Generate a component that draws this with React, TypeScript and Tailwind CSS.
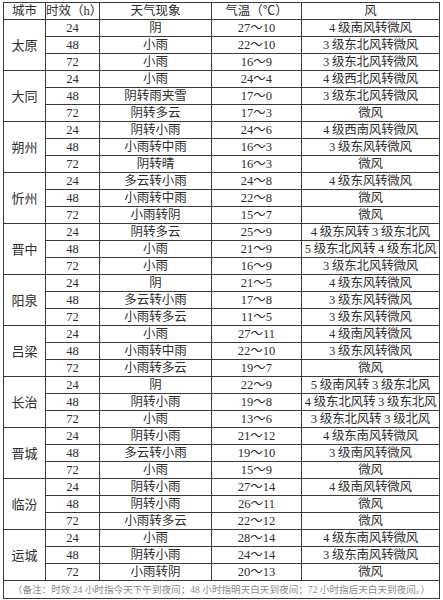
const rows: [string, [string, string, string, string][]][] = [
  ['太原', [
    ['24', '阴', '27～10', '4 级南风转微风'],
    ['48', '小雨', '22～10', '3 级东北风转微风'],
    ['72', '小雨', '16～9', '3 级东北风转微风'],
  ]],
  ['大同', [
    ['24', '小雨', '24～4', '4 级西北风转微风'],
    ['48', '阴转雨夹雪', '17～0', '3 级东北风转微风'],
    ['72', '阴转多云', '17～3', '微风'],
  ]],
  ['朔州', [
    ['24', '阴转小雨', '24～6', '4 级西南风转微风'],
    ['48', '小雨转中雨', '16～3', '3 级东风转微风'],
    ['72', '阴转晴', '16～3', '微风'],
  ]],
  ['忻州', [
    ['24', '多云转小雨', '24～8', '4 级东风转微风'],
    ['48', '小雨转中雨', '22～8', '微风'],
    ['72', '小雨转阴', '15～7', '微风'],
  ]],
  ['晋中', [
    ['24', '阴转多云', '25～9', '4 级东风转 3 级东北风'],
    ['48', '小雨', '21～9', '5 级东北风转 4 级东北风'],
    ['72', '小雨', '16～9', '3 级东北风转微风'],
  ]],
  ['阳泉', [
    ['24', '阴', '21～5', '4 级东风转微风'],
    ['48', '多云转小雨', '17～8', '3 级东风转微风'],
    ['72', '小雨转多云', '11～5', '3 级东风转微风'],
  ]],
  ['吕梁', [
    ['24', '小雨', '27～11', '4 级南风转微风'],
    ['48', '小雨转中雨', '22～10', '3 级东风转微风'],
    ['72', '小雨转多云', '19～7', '微风'],
  ]],
  ['长治', [
    ['24', '阴', '22～9', '5 级南风转 3 级东北风'],
    ['48', '阴转小雨', '19～8', '4 级东北风转 3 级东北风'],
    ['72', '小雨', '13～6', '3 级东北风转 3 级北风'],
  ]],
  ['晋城', [
    ['24', '阴转小雨', '21～12', '4 级东南风转微风'],
    ['48', '多云转小雨', '19～10', '3 级南风转微风'],
    ['72', '小雨', '15～9', '微风'],
  ]],
  ['临汾', [
    ['24', '阴转小雨', '27～14', '4 级南风转微风'],
    ['48', '阴转小雨', '26～11', '微风'],
    ['72', '小雨转多云', '22～12', '微风'],
  ]],
  ['运城', [
    ['24', '小雨', '28～14', '4 级东南风转微风'],
    ['48', '阴转小雨', '24～14', '3 级东南风转微风'],
    ['72', '小雨转阴', '20～13', '微风'],
  ]],
];

const cell = 'border border-[#3a3a3a] h-[17px] p-0 text-center align-middle leading-none whitespace-nowrap';

export default function App() {
  return (
    <div className="w-[443px] h-[600px] bg-white pt-[2px] pl-[3px] text-[#2e2e2e] font-['Liberation_Serif','Noto_Sans_CJK_SC',serif] text-[12.5px]">
      <table className="border-collapse table-fixed w-[436px]">
        <colgroup>
          <col className="w-[42px]" />
          <col className="w-[54px]" />
          <col className="w-[112px]" />
          <col className="w-[90px]" />
          <col className="w-[138px]" />
        </colgroup>
        <thead>
          <tr>
            <th className={`${cell} font-normal`}>城市</th>
            <th className={`${cell} font-normal`}>时效（h）</th>
            <th className={`${cell} font-normal`}>天气现象</th>
            <th className={`${cell} font-normal`}>气温（℃）</th>
            <th className={`${cell} font-normal`}>风</th>
          </tr>
        </thead>
        <tbody>
          {rows.map(([city, items]) =>
            items.map((r, i) => (
              <tr key={city + r[0]}>
                {i === 0 && (
                  <td rowSpan={3} className={`${cell} text-[13px]`}>{city}</td>
                )}
                <td className={cell}>{r[0]}</td>
                <td className={cell}>{r[1]}</td>
                <td className={cell}>{r[2]}</td>
                <td className={`${cell} tracking-[-0.2px]`}>{r[3]}</td>
              </tr>
            ))
          )}
          <tr>
            <td colSpan={5} className="border border-[#3a3a3a] h-[18px] p-0 text-center align-middle leading-none whitespace-nowrap text-[9.6px] text-[#8a8a8a]">
              （备注：时效 24 小时指今天下午到夜间；48 小时指明天白天到夜间；72 小时指后天白天到夜间。）
            </td>
          </tr>
        </tbody>
      </table>
    </div>
  );
}
